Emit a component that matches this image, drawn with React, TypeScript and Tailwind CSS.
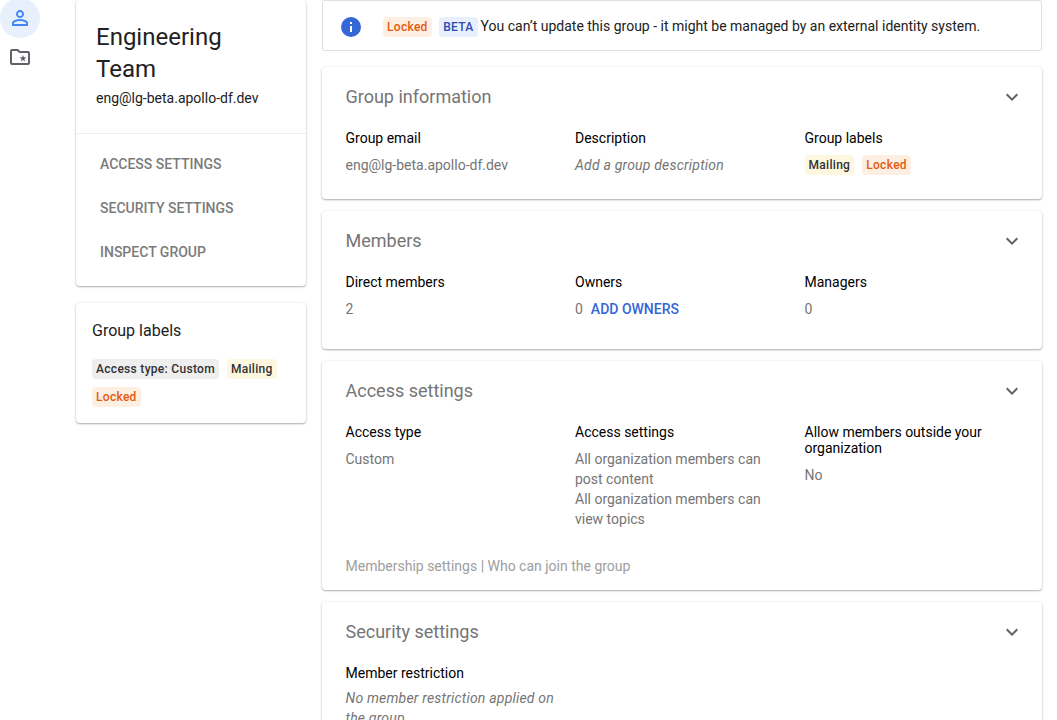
import React from "react";

const cardShadow = "rounded-[4px] bg-white shadow-[0_1px_2px_rgba(0,0,0,0.3),0_0_3px_rgba(0,0,0,0.08)]";
const threeCols = "grid grid-cols-[229.5px_229.5px_1fr]";

function Chip({ kind, children }: { kind: "locked" | "mailing" | "access" | "beta"; children: React.ReactNode }) {
  const colors = {
    locked: "bg-[#feefe3] text-[#e8590c]",
    mailing: "bg-[#fef7e0] text-[#303134]",
    access: "bg-[#eeeeee] text-[#303134]",
    beta: "bg-[#e8f0fe] text-[#2a4cae]",
  };
  return (
    <span className={`inline-flex h-[20px] items-center rounded-[4px] px-[4px] text-[12px] font-medium tracking-[0.3px] ${colors[kind]}`}>
      {children}
    </span>
  );
}

function Chevron() {
  return (
    <svg width="24" height="24" viewBox="0 0 24 24" fill="#5f6368">
      <path d="M7.41 8.59 12 13.17l4.59-4.58L18 10l-6 6-6-6z" />
    </svg>
  );
}

function Field({ label, children }: { label: string; children: React.ReactNode }) {
  return (
    <div className="pr-[16px]">
      <div className="text-[14px] leading-[16px] text-[#000000]">{label}</div>
      <div className="mt-[9px] text-[14px] leading-[20px] text-[#757575]">{children}</div>
    </div>
  );
}

function Section({ title, className, children }: { title: string; className: string; children: React.ReactNode }) {
  return (
    <section className={`${cardShadow} px-[23.5px] pt-[18px] ${className}`}>
      <div className="flex h-[24px] items-center justify-between">
        <h2 className="text-[18px] leading-[24px] text-[#757575]">{title}</h2>
        <div className="-mr-[5.5px]">
          <Chevron />
        </div>
      </div>
      {children}
    </section>
  );
}

export default function App() {
  return (
    <div className="flex h-[720px] w-[1057px] items-start overflow-hidden bg-white font-['Roboto',sans-serif]">
      {/* icon rail */}
      <nav className="flex w-[76px] shrink-0 flex-col">
        <div className="-mt-[2px] flex h-[40px] w-[40px] items-center justify-center rounded-full bg-[#e8f0fe] pb-[1px]">
          <svg width="24" height="24" viewBox="0 0 24 24" fill="#4285f4">
            <path d="M12 5.9c1.16 0 2.1.94 2.1 2.1s-.94 2.1-2.1 2.1S9.9 9.16 9.9 8s.94-2.1 2.1-2.1m0 9c2.97 0 6.1 1.46 6.1 2.1v1.1H5.9V17c0-.64 3.13-2.1 6.1-2.1M12 4C9.79 4 8 5.79 8 8s1.79 4 4 4 4-1.79 4-4-1.79-4-4-4zm0 9c-2.67 0-8 1.34-8 4v3h16v-3c0-2.66-5.33-4-8-4z" />
          </svg>
        </div>
        <div className="mt-[7px] flex w-[40px] justify-center">
          <svg width="24" height="24" viewBox="0 0 24 24" fill="#5f6368">
            <path d="M20 6h-8l-2-2H4c-1.1 0-2 .9-2 2v12c0 1.1.9 2 2 2h16c1.1 0 2-.9 2-2V8c0-1.1-.9-2-2-2zm0 12H4V6h5.17l2 2H20v10z" />
            <path d="M15 9.9l.88 2.39 2.54.1-1.99 1.57.69 2.45L15 15l-2.12 1.41.69-2.45-1.99-1.57 2.54-.1z" />
          </svg>
        </div>
      </nav>

      {/* left column */}
      <aside className="flex w-[230px] shrink-0 flex-col gap-[17px]">
        <div className={`${cardShadow} h-[286px]`}>
          <div className="h-[134px] border-b border-[#eeeeee] px-[20px] pt-[21px]">
            <h1 className="w-[150px] text-[24px] leading-[32px] text-[#212121]">Engineering Team</h1>
            <p className="mt-[3px] text-[14px] leading-[20px] text-[#212121]">eng@lg-beta.apollo-df.dev</p>
          </div>
          <ul className="px-[24px] pt-[8px] text-[14px] font-medium text-[#7b7b7b]">
            <li className="flex h-[44px] items-center">ACCESS SETTINGS</li>
            <li className="flex h-[44px] items-center">SECURITY SETTINGS</li>
            <li className="flex h-[44px] items-center">INSPECT GROUP</li>
          </ul>
        </div>
        <div className={`${cardShadow} h-[120px] px-[16px] pt-[18px]`}>
          <h3 className="text-[16px] leading-[20px] text-[#212121]">Group labels</h3>
          <div className="mt-[18px] flex flex-wrap gap-x-[8px] gap-y-[8px]">
            <Chip kind="access">Access type: Custom</Chip>
            <Chip kind="mailing">Mailing</Chip>
            <Chip kind="locked">Locked</Chip>
          </div>
        </div>
      </aside>

      {/* main column */}
      <main className="ml-[16px] flex w-[720px] shrink-0 flex-col gap-[12px]">
        <div className="mb-[4px] flex h-[51px] items-center rounded-[2px] border border-[#e0e0e0] pt-[2px] pl-[15.5px] text-[14px] text-[#212121]">
          <svg width="24" height="24" viewBox="0 0 24 24" fill="#3367d6" className="shrink-0">
            <path d="M12 2a10 10 0 1 0 0 20 10 10 0 0 0 0-20zm1 15h-2v-6h2v6zm0-8h-2V7h2v2z" />
          </svg>
          <div className="ml-[20.5px] flex items-center">
            <Chip kind="locked">Locked</Chip>
            <span className="ml-[7.5px] flex"><Chip kind="beta">BETA</Chip></span>
            <span className="ml-[3px]">You can’t update this group - it might be managed by an external identity system.</span>
          </div>
        </div>

        <Section title="Group information" className="h-[132px]">
          <div className={`mt-[21px] ${threeCols}`}>
            <Field label="Group email">eng@lg-beta.apollo-df.dev</Field>
            <Field label="Description"><em className="tracking-[0.2px]">Add a group description</em></Field>
            <div>
              <div className="text-[14px] leading-[16px] text-[#000000]">Group labels</div>
              <div className="mt-[9px] flex gap-[8px]">
                <Chip kind="mailing">Mailing</Chip>
                <Chip kind="locked">Locked</Chip>
              </div>
            </div>
          </div>
        </Section>

        <Section title="Members" className="h-[138px]">
          <div className={`mt-[21px] ${threeCols}`}>
            <Field label="Direct members">2</Field>
            <Field label="Owners">
              0 <span className="ml-[4.5px] font-medium text-[#3367d6]">ADD OWNERS</span>
            </Field>
            <Field label="Managers">0</Field>
          </div>
        </Section>

        <Section title="Access settings" className="h-[229px]">
          <div className={`mt-[21px] h-[126px] ${threeCols}`}>
            <Field label="Access type">Custom</Field>
            <Field label="Access settings">
              All organization members can post content
              <br />
              All organization members can view topics
            </Field>
            <Field label="Allow members outside your organization">No</Field>
          </div>
          <p className="mt-[6px] text-[14px] leading-[20px] text-[#9e9e9e]">Membership settings | Who can join the group</p>
        </Section>

        <Section title="Security settings" className="h-[160px]">
          <div className={`mt-[21px] ${threeCols}`}>
            <Field label="Member restriction">
              <em className="-mt-[2px] block tracking-[0.2px]">No member restriction applied on the group</em>
            </Field>
          </div>
        </Section>
      </main>
    </div>
  );
}
